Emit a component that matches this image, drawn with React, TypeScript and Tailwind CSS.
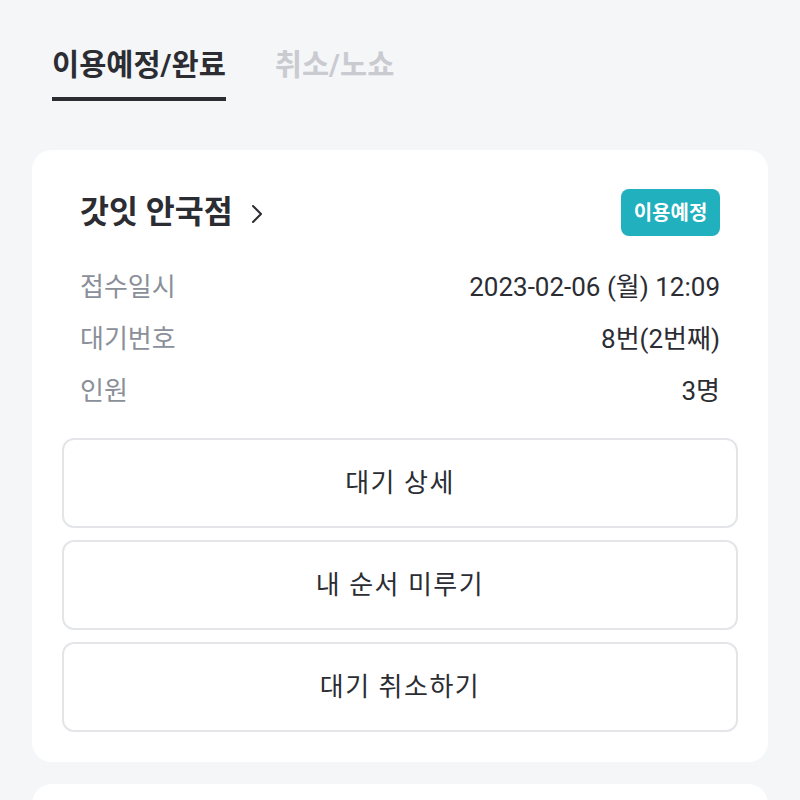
const rows = [
  { label: "접수일시", value: "2023-02-06 (월) 12:09" },
  { label: "대기번호", value: "8번(2번째)" },
  { label: "인원", value: "3명" },
];

const actions = ["대기 상세", "내 순서 미루기", "대기 취소하기"];

export default function App() {
  return (
    <div
      className="h-[800px] overflow-hidden bg-[#f5f6f8] text-[#2b2d33]"
      style={{ fontFamily: "Roboto, 'Noto Sans CJK KR', sans-serif" }}
    >
      <nav className="flex gap-[49px] px-[52px] pt-[44px]">
        <div className="flex flex-col">
          <span className="text-[29.5px] font-bold leading-[42px]">이용예정/완료</span>
          <div className="mt-[11px] h-[4px] bg-[#2b2d33]" />
        </div>
        <span className="text-[29.5px] font-bold leading-[42px] text-[#c9cbd0]">취소/노쇼</span>
      </nav>

      <main className="mt-[49px] flex flex-col gap-[22px] px-[32px]">
        <section className="rounded-[20px] bg-white px-[30px] pb-[30px] pt-[39px]">
          <div className="flex items-center justify-between px-[18px]">
            <div className="flex items-center gap-[18px]">
              <h2 className="text-[31.5px] font-bold leading-[44px]">갓잇 안국점</h2>
              <svg width="12" height="22" viewBox="0 0 12 22" fill="none" className="mt-[2px]">
                <path d="M2 3 L10 11 L2 19" stroke="#2b2d33" strokeWidth="2" strokeLinecap="round" strokeLinejoin="round" />
              </svg>
            </div>
            <span className="flex h-[47px] w-[99px] items-center justify-center rounded-[8px] bg-[#20b0be] text-[20px] font-bold text-white">
              이용예정
            </span>
          </div>

          <dl className="mt-[32px] flex flex-col gap-[14px] px-[18px]">
            {rows.map((r) => (
              <div key={r.label} className="flex items-center justify-between text-[26px] leading-[38px]">
                <dt className="text-[#8a8f99]">{r.label}</dt>
                <dd>{r.value}</dd>
              </div>
            ))}
          </dl>

          <div className="mt-[28px] flex flex-col gap-[12px]">
            {actions.map((a) => (
              <button
                key={a}
                type="button"
                className="flex h-[90px] items-center justify-center rounded-[12px] border-2 border-[#e3e5e9] bg-white text-[26px] tracking-[1.5px]"
              >
                {a}
              </button>
            ))}
          </div>
        </section>

        <section className="h-[100px] rounded-[20px] bg-white" />
      </main>
    </div>
  );
}
